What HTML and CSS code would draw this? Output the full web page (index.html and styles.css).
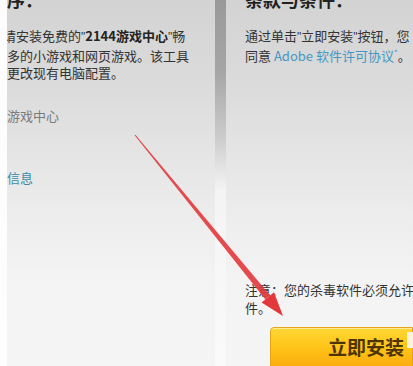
FILE: index.html
```html
<!DOCTYPE html>
<html lang="zh-CN">
<head>
<meta charset="utf-8">
<title>安装</title>
<link rel="stylesheet" href="styles.css">
</head>
<body>
<div class="page">
  <div class="edge"></div>
  <section class="panel left">
    <h2 class="head">序：</h2>
    <p class="body first">请安装免费的<span class="q">"</span><b>2144游戏中心</b><span class="q">"</span>畅</p>
    <p class="body">多的小游戏和网页游戏。该工具</p>
    <p class="body">更改现有电脑配置。</p>
    <p class="muted">游戏中心</p>
    <p class="info">信息</p>
  </section>
  <div class="divider"></div>
  <section class="panel right">
    <h2 class="head">条款与条件：</h2>
    <p class="body">通过单击<span class="q">"</span>立即安装<span class="q">"</span>按钮，您</p>
    <p class="body">同意 <span class="link">Adobe 软件许可协议<sup>*</sup></span>。</p>
    <div class="spacer"></div>
    <p class="body">注意：您的杀毒软件必须允许</p>
    <p class="body">件。</p>
    <div class="btnrow">
      <button class="install">立即安装<span class="glint"></span></button>
    </div>
  </section>
  <svg class="arrow" width="413" height="366" viewBox="0 0 413 366">
    <polygon points="134.6,135.3 135.4,134.7 270.2,295.4 265.4,299.4" fill="#e2383c" opacity="0.9"/>
    <polygon points="283,316 261.6,302.5 274.0,292.3" fill="#e2383c"/>
  </svg>
</div>
</body>
</html>
```

FILE: styles.css
```css
html, body {
  margin: 0;
  padding: 0;
}
body {
  width: 413px;
  height: 366px;
  overflow: hidden;
  background: #fdfdfd;
  font-family: "Noto Sans CJK SC", "Noto Sans", sans-serif;
}
.page {
  position: relative;
  display: flex;
  width: 413px;
  height: 366px;
  overflow: hidden;
}
.edge {
  width: 7px;
  flex: none;
  background: #fdfdfd;
}
.panel {
  display: flex;
  flex-direction: column;
  overflow: hidden;
  background: linear-gradient(to bottom, #d3d3d3 0%, #dcdcdc 25%, #ebebeb 55%, #f3f3f3 75%, #f5f5f5 100%);
}
.left {
  width: 208px;
  flex: none;
}
.right {
  flex: 1;
  padding-left: 19px;
}
.divider {
  width: 11px;
  flex: none;
  background: linear-gradient(to bottom, #999 0%, #a6a6a6 20%, #cdcdcd 38%, #f4f4f4 52%, #fafafa 100%);
}
.head {
  margin: -12px 0 0 0;
  font-size: 18px;
  line-height: 22px;
  font-weight: bold;
  color: #222;
}
.body {
  margin: 0;
  font-size: 13px;
  line-height: 17.5px;
  color: #333;
  white-space: nowrap;
}
.head + .body {
  margin-top: 17px;
}
.first {
  margin-left: -4px;
}
.q {
  font-family: "Liberation Sans", sans-serif;
  font-size: 12px;
}
.body b {
  font-weight: bold;
  color: #222;
}
.muted {
  margin: 25px 0 0 0;
  font-size: 13px;
  line-height: 17px;
  color: #7a7a7a;
}
.info {
  margin: 45px 0 0 0;
  font-size: 13px;
  line-height: 17px;
  color: #3b8ba6;
}
.link {
  color: #4597c4;
}
.link sup {
  font-size: 8px;
  line-height: 0;
}
.spacer {
  height: 217px;
  flex: none;
}
.btnrow {
  margin-top: 11px;
  display: flex;
  margin-left: 25px;
}
.install {
  position: relative;
  width: 150px;
  height: 44px;
  padding: 0 0 6px 57px;
  border: 1px solid #e8a418;
  border-radius: 4px 0 0 0;
  background: linear-gradient(to bottom, #ffd735 0%, #ffc519 45%, #f9a80c 100%);
  font-family: "Noto Sans CJK SC", sans-serif;
  font-size: 19px;
  font-weight: bold;
  color: #4e3400;
  text-align: left;
  box-shadow: inset 0 1px 0 rgba(255,255,255,0.5);
}
.glint {
  position: absolute;
  left: 136px;
  top: 4px;
  width: 8px;
  height: 16px;
  background: #fbf3dc;
}
.arrow {
  position: absolute;
  left: 0;
  top: 0;
  pointer-events: none;
}
```
